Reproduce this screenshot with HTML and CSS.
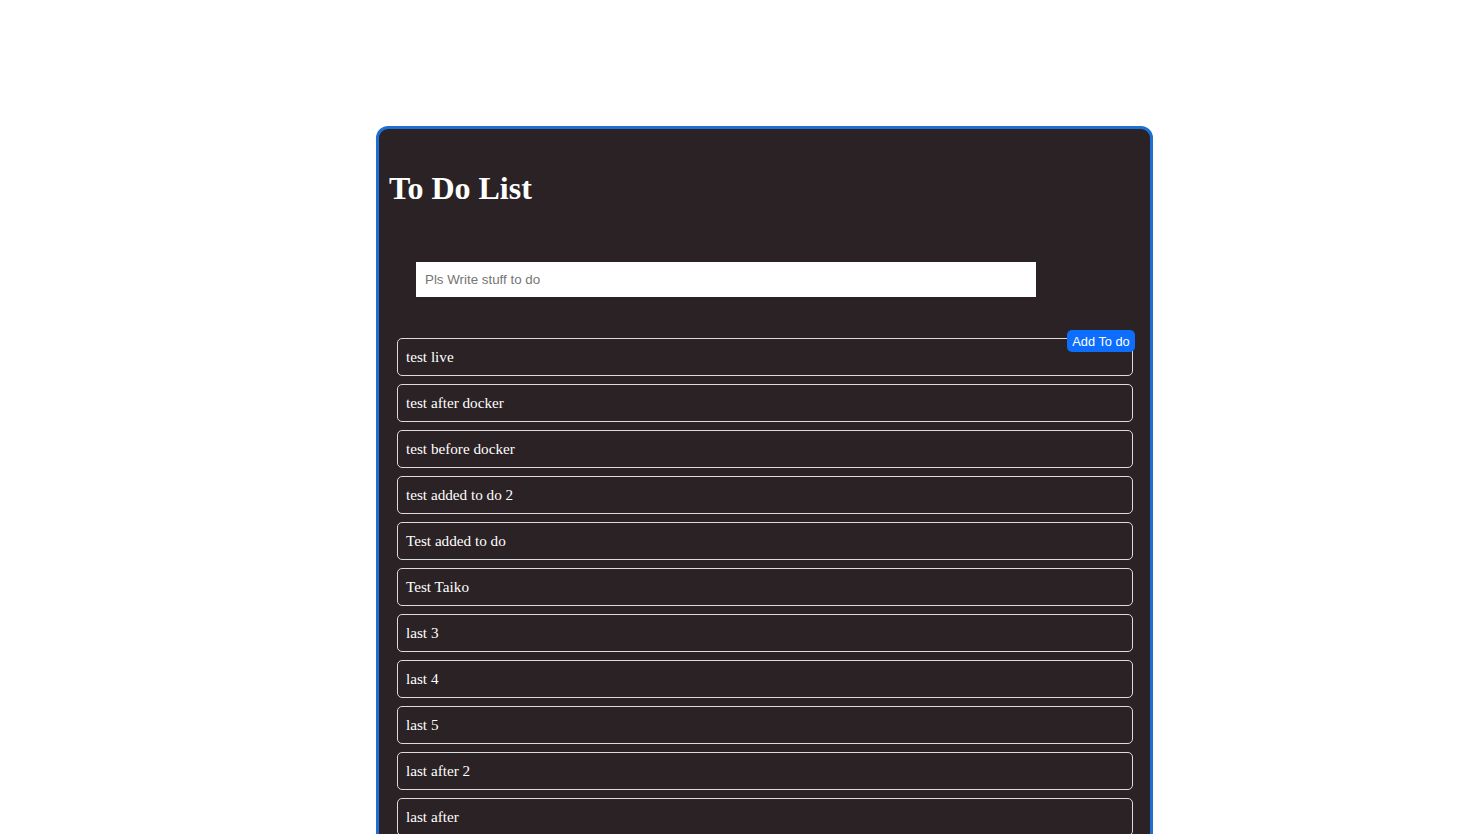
FILE: index.html
```html
<!DOCTYPE html>
<html>
<head>
<meta charset="utf-8">
<title>To Do List</title>
<link rel="stylesheet" href="styles.css">
</head>
<body>
<div class="card">
  <h1 class="title">To Do List</h1>
  <div class="form">
    <input class="todo-input" type="text" placeholder="Pls Write stuff to do">
  </div>
  <div class="list-wrap">
    <button class="add-btn">Add To do</button>
    <ul class="list">
      <li class="item">test live</li>
      <li class="item">test after docker</li>
      <li class="item">test before docker</li>
      <li class="item">test added to do 2</li>
      <li class="item">Test added to do</li>
      <li class="item">Test Taiko</li>
      <li class="item">last 3</li>
      <li class="item">last 4</li>
      <li class="item">last 5</li>
      <li class="item">last after 2</li>
      <li class="item">last after</li>
    </ul>
  </div>
</div>
</body>
</html>
```
FILE: styles.css
```css
html, body {
  background: #ffffff;
}
body {
  margin: 8px;
  font-family: "Liberation Serif", "Times New Roman", serif;
}
.card {
  margin: 118px 0 0 368px;
  width: 771px;
  border: 3px solid #1e6fd2;
  border-radius: 12px;
  background: #2a2224;
  padding: 20px 0 40px;
  color: #ffffff;
}
.title {
  margin: 21px 0 0 10px;
  font-size: 32px;
  font-weight: bold;
  line-height: 37px;
}
.form {
  margin-top: 55px;
  padding-left: 37px;
}
.todo-input {
  display: block;
  width: 620px;
  height: 35px;
  box-sizing: border-box;
  border: none;
  padding: 0 9px;
  font-family: "Liberation Sans", Arial, sans-serif;
  font-size: 13.333px;
  background: #ffffff;
  color: #333;
  outline: none;
}
.todo-input::placeholder {
  color: #757575;
}
.list-wrap {
  position: relative;
  margin: 41px 17px 0 18px;
}
.add-btn {
  position: absolute;
  top: -8px;
  right: -2px;
  height: 22px;
  width: 68px;
  padding: 0;
  border: none;
  border-radius: 5px;
  background: #0d6efd;
  color: #ffffff;
  font-family: "Liberation Sans", Arial, sans-serif;
  font-size: 12.8px;
  z-index: 2;
}
.list {
  list-style: none;
  margin: 0;
  padding: 0;
  display: flex;
  flex-direction: column;
  gap: 8px;
}
.item {
  height: 38px;
  box-sizing: border-box;
  border: 1px solid #dcdcdc;
  border-radius: 5px;
  display: flex;
  align-items: center;
  padding: 0 8px;
  font-size: 15.2px;
  color: #ffffff;
}
```
